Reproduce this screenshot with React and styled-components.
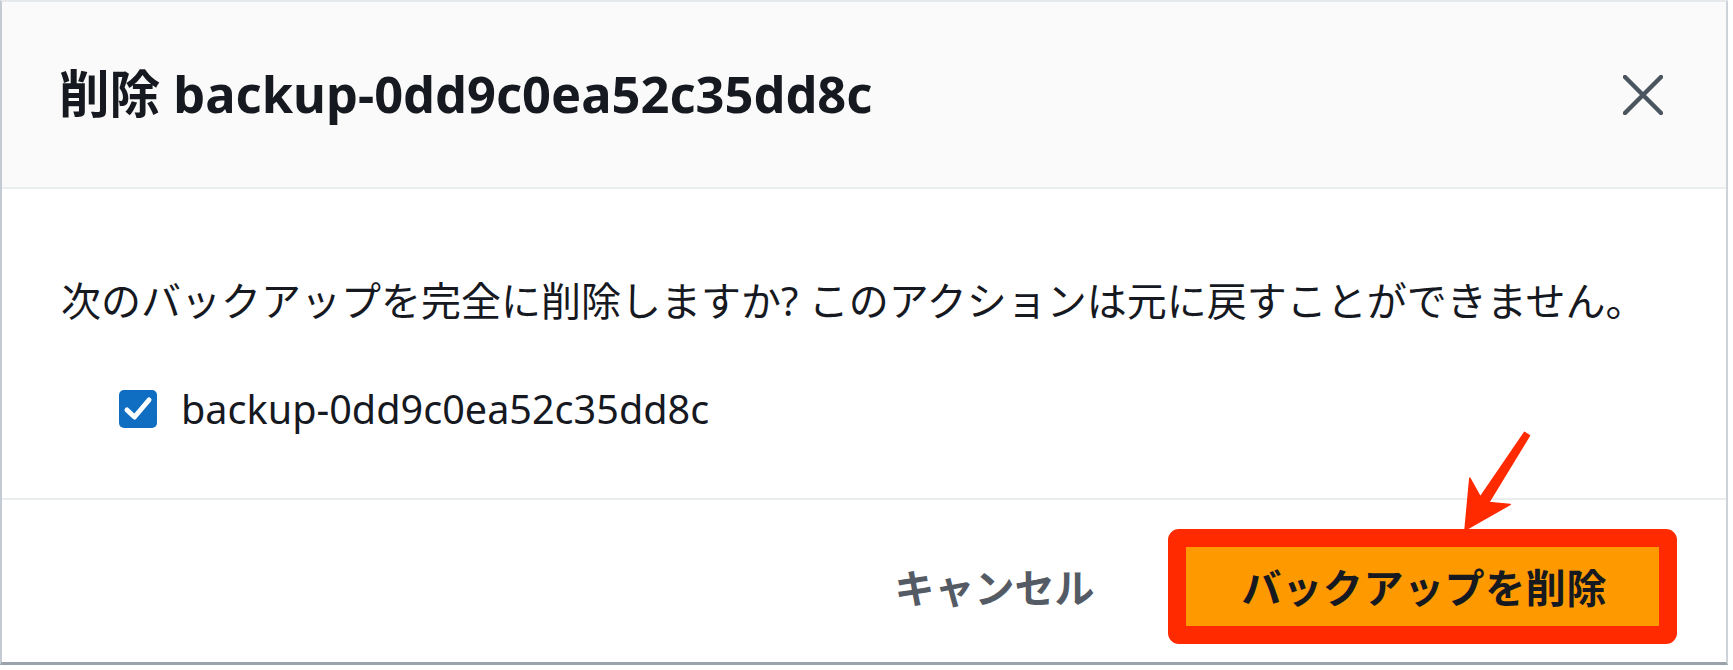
import React from "react";
import styled, { createGlobalStyle } from "styled-components";

const Global = createGlobalStyle`
  html, body { margin: 0; padding: 0; background: #ffffff; }
  body { font-family: "Noto Sans", "Noto Sans CJK JP", sans-serif; color: #16191f; }
`;

const Dialog = styled.div`
  width: 1728px;
  box-sizing: border-box;
  background: #ffffff;
  border-top: 2px solid #e6e9ec;
  border-left: 2px solid #c3cad1;
  border-right: 2px solid #cdd3d8;
  border-bottom: 3px solid #9aa3ab;
  display: flex;
  flex-direction: column;
`;

const Header = styled.header`
  height: 185px;
  box-sizing: content-box;
  display: flex;
  align-items: center;
  justify-content: space-between;
  padding: 0 63px 0 57px;
  background: #fafafa;
  border-bottom: 2px solid #eaeded;
`;

const Title = styled.h1`
  margin: 0;
  font-family: "Noto Sans", "Noto Sans CJK JP", sans-serif;
  font-weight: 700;
  font-size: 50.6px;
  line-height: 1.2;
  color: #16191f;
`;

const CloseButton = styled.button`
  border: 0;
  background: transparent;
  padding: 0;
  width: 40px;
  height: 40px;
  display: flex;
  align-items: center;
  justify-content: center;
  cursor: pointer;
`;

const Body = styled.section`
  height: 311px;
  box-sizing: border-box;
  padding: 86px 40px 0 59px;
  border-bottom: 2px solid #eaeded;
  display: flex;
  flex-direction: column;
  gap: 56px;
`;

const Message = styled.p`
  margin: 0;
  font-family: "Noto Sans", "Noto Sans CJK JP", sans-serif;
  font-size: 40px;
  line-height: 52px;
  color: #16191f;
  white-space: nowrap;
`;

const CheckRow = styled.label`
  display: flex;
  align-items: center;
  gap: 24px;
  padding-left: 58px;
  height: 52px;
`;

const CheckBox = styled.span`
  width: 38px;
  height: 38px;
  border-radius: 5px;
  background: #0f6ec2;
  display: flex;
  align-items: center;
  justify-content: center;
`;

const CheckLabel = styled.span`
  font-family: "Noto Sans", "Noto Sans CJK JP", sans-serif;
  font-size: 39.6px;
  color: #16191f;
`;

const Footer = styled.footer`
  height: 162px;
  box-sizing: border-box;
  display: flex;
  align-items: center;
  justify-content: flex-end;
  padding: 10px 49px 0 0;
  gap: 73px;
`;

const TextButton = styled.button`
  border: 0;
  background: transparent;
  padding: 0;
  font-family: "Noto Sans CJK JP", sans-serif;
  font-weight: 700;
  font-size: 40px;
  color: #545b64;
  cursor: pointer;
`;

const Highlight = styled.span`
  position: relative;
  display: inline-flex;
  border: 18px solid #ff2a00;
  border-radius: 11px;
  background: #ff2a00;
`;

const PrimaryButton = styled.button`
  border: 0;
  height: 79px;
  padding: 0 52px 0 56px;
  background: #ff9900;
  font-family: "Noto Sans CJK JP", sans-serif;
  font-weight: 700;
  font-size: 40px;
  letter-spacing: 0.6px;
  color: #16191f;
  cursor: pointer;
`;

const Arrow = styled.svg`
  position: absolute;
  left: 269px;
  top: -123px;
  width: 80px;
  height: 110px;
  overflow: visible;
`;

export default function App() {
  return (
    <>
      <Global />
      <Dialog>
        <Header>
          <Title>削除 backup-0dd9c0ea52c35dd8c</Title>
          <CloseButton aria-label="閉じる">
            <svg width="40" height="40" viewBox="0 0 40 40">
              <path d="M2 2 L38 38 M38 2 L2 38" stroke="#4b5560" strokeWidth="4.5" strokeLinecap="round" />
            </svg>
          </CloseButton>
        </Header>
        <Body>
          <Message>次のバックアップを完全に削除しますか? このアクションは元に戻すことができません。</Message>
          <CheckRow>
            <CheckBox>
              <svg width="32" height="32" viewBox="0 0 32 32">
                <path d="M5 17 L12.5 24 L27 7" fill="none" stroke="#ffffff" strokeWidth="5" strokeLinecap="round" strokeLinejoin="round" />
              </svg>
            </CheckBox>
            <CheckLabel>backup-0dd9c0ea52c35dd8c</CheckLabel>
          </CheckRow>
        </Body>
        <Footer>
          <TextButton>キャンセル</TextButton>
          <Highlight>
            <PrimaryButton>バックアップを削除</PrimaryButton>
            <Arrow viewBox="0 0 80 110">
              <polygon
                points="69.5,8.4 25.4,73 14.8,54.2 10,106 55.2,80.4 33.8,78.4 74.5,11.6"
                fill="#ff2a00"
                stroke="#ff2a00"
                strokeWidth="1.5"
                strokeLinejoin="round"
              />
            </Arrow>
          </Highlight>
        </Footer>
      </Dialog>
    </>
  );
}
